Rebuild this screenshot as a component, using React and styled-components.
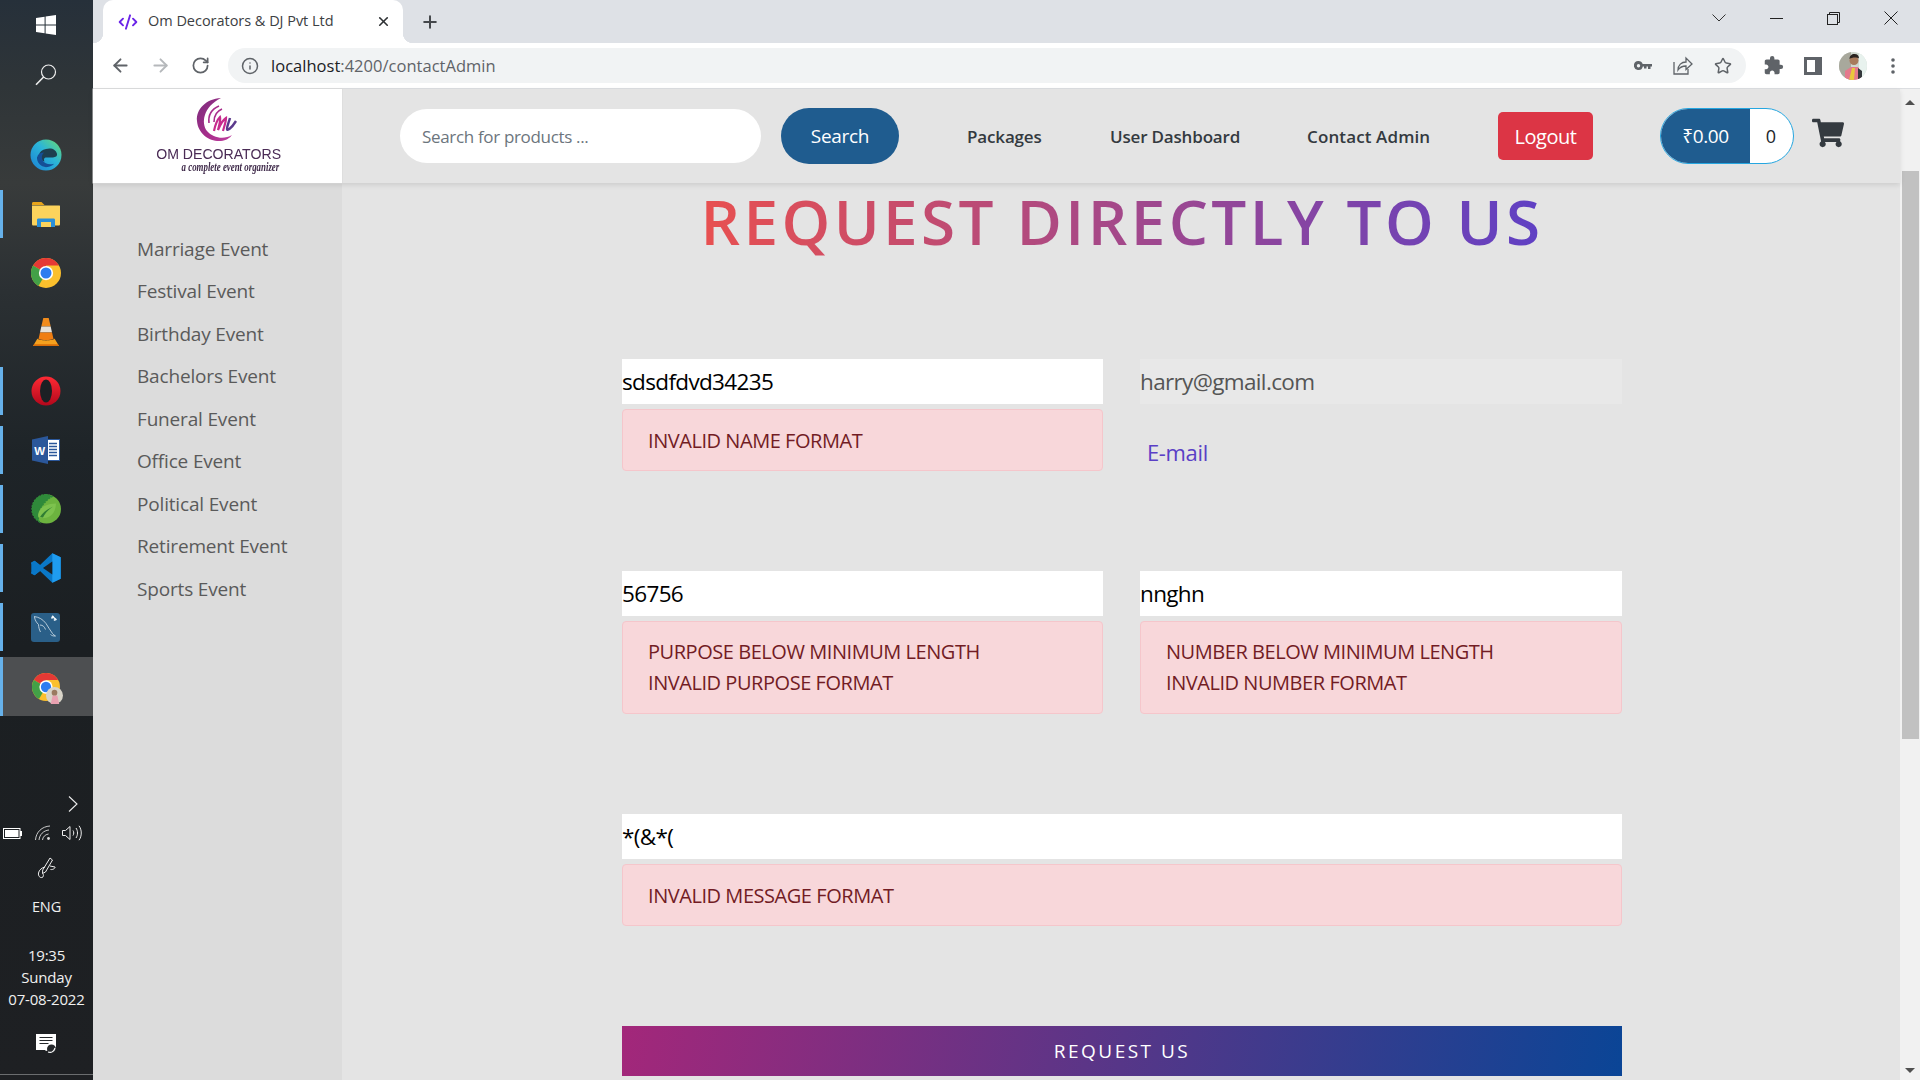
import React from "react";
import styled, { createGlobalStyle } from "styled-components";
import { ArrowLeft, ArrowRight, RotateCw, Info, Star, X, Plus, CodeXml } from "lucide-react";
import { MdExtension } from "react-icons/md";
import { FaShoppingCart } from "react-icons/fa";

const FONT = `"Open Sans", "Noto Sans", sans-serif`;

const Global = createGlobalStyle`
  html, body { margin: 0; padding: 0; height: 1080px; overflow: hidden; background: #e4e4e4; }
  * { box-sizing: border-box; }
  body { font-family: ${FONT}; }
`;

const Screen = styled.div`display: flex; width: 1920px; height: 1080px; overflow: hidden;`;

/* ---------- Windows taskbar ---------- */
const Taskbar = styled.aside`
  width: 93px; flex: none; height: 1080px; display: flex; flex-direction: column;
  background: linear-gradient(180deg, #26303a 0%, #2f3538 8%, #383b3b 17%, #2b3033 27%, #1e2428 42%, #1b1f22 60%, #1e2023 100%);
  color: #f0f0f0;
`;
const SystemSlot = styled.div`
  height: 48px; display: flex; align-items: center; justify-content: center; padding-right: 1px;
  &:first-child { height: 49px; }
  &:nth-child(2) { margin-top: 2px; }
`;
const AppList = styled.div`display: flex; flex-direction: column; gap: 11px; margin-top: 32px;`;
const AppSlot = styled.div`
  position: relative; height: ${p => (p.$active ? 59 : 48)}px; display: flex; align-items: center; justify-content: center;
  margin-top: ${p => (p.$active ? -5 : 0)}px;
  background: ${p => (p.$active ? "#4d4f51" : "transparent")};
  border-left: 3px solid ${p => (p.$running ? "#66b1ea" : "transparent")};
  padding-right: 5px;
`;
const ProfileBadge = styled.span`position: absolute; left: 43px; top: 30px; display: flex;`;
const Tray = styled.div`margin-top: auto; display: flex; flex-direction: column; align-items: center;`;
const TrayChevron = styled.div`align-self: flex-end; margin: 0 15px 12px 0; height: 16px; display: flex;`;
const TrayIcons = styled.div`display: flex; align-items: center; width: 100%; padding-left: 3px; height: 18px;`;
const TrayGlyph = styled.span`display: flex; margin-left: ${p => p.$ml || 0}px;`;
const TrayPen = styled.div`margin-top: 15px; height: 24px; display: flex;`;
const Lang = styled.div`margin-top: 16px; font-size: 14.5px; line-height: 20px; letter-spacing: -.1px;`;
const Clock = styled.div`margin-top: 27px; font-size: 15px; line-height: 22px; text-align: center; letter-spacing: -.2px; white-space: nowrap;`;
const Notice = styled.div`margin-top: 24px; height: 22px; display: flex;`;
const TrayRule = styled.div`width: 100%; height: 1px; background: #6b6d6f; margin-top: 18px; margin-bottom: 5px;`;

const WinLogo = () => (
  <svg width="20" height="20" viewBox="0 0 20 20"><path fill="#fff" d="M0 3l8.6-1.2v7.6H0zM9.6 1.6L20 0v9.4H9.6zM0 10.4h8.6v7.8L0 17zM9.6 10.4H20V20L9.6 18.4z" /></svg>
);
const SearchGlyph = () => (
  <svg width="22" height="22" viewBox="0 0 22 22" fill="none" stroke="#eee" strokeWidth="1.2"><circle cx="13.5" cy="8" r="7" /><path d="M8.6 13L1 20.8" strokeWidth="1.6" /></svg>
);
const EdgeIcon = () => (
  <svg width="32" height="32" viewBox="0 0 32 32">
    <defs>
      <linearGradient id="eg1" x1="0" y1="1" x2="1" y2="0"><stop offset="0" stopColor="#1a7fd4" /><stop offset=".55" stopColor="#2bb5d8" /><stop offset="1" stopColor="#6bdc6e" /></linearGradient>
    </defs>
    <circle cx="16" cy="16" r="15.5" fill="url(#eg1)" />
    <path d="M16 10c5.5-1.6 10 .6 11 4.8.5 2.3-1.5 3.6-4 3.6h-6.5c-2.5 0-3.2 2-1.8 4.2-4.2-1-6-4-5.6-7 .4-2.8 3.2-4.8 6.9-5.6z" fill="#1d3a4a" opacity=".96" />
    <path d="M7 17.8c-.6 6.2 4.7 11.2 10.7 10.2 2.8-.4 5-1.7 6.3-3.3-4 1.3-9.5.6-11.5-3.7-1.2-2.3-.7-5.6 1.5-7.5-3.5.2-6.2 1.5-6.5 4.3z" fill="#154f97" />
  </svg>
);
const FolderIcon = () => (
  <svg width="30" height="26" viewBox="0 0 30 26">
    <path d="M1 2.5C1 1.5 1.6 1 2.5 1h8l3 3H1z" fill="#e8a41a" />
    <path d="M1 4.5h27.5c.4 0 .5.3.5.5v18c0 1-.5 1.500-1.500 1.500h-25c-1 0-1.500-.5-1.500-1.500z" fill="#fcd35c" />
    <path d="M6 26v-7c0-1 .5-1.500 1.500-1.500h15c1 0 1.500.5 1.500 1.500v7h-4v-5h-10v5z" fill="#2a8fd8" />
    <rect x="10" y="21" width="10" height="5" fill="#fcd35c" />
  </svg>
);
const ChromeIcon = ({ size = 30 }) => (
  <svg width={size} height={size} viewBox="0 0 24 24">
    <circle cx="12" cy="12" r="12" fill="#fbc02d" />
    <path d="M12 12L1.6 6A12 12 0 0 1 22.39 6H12z" fill="#e53935" />
    <path d="M12 12L6 22.39A12 12 0 0 1 1.6 6z" fill="#43a047" />
    <circle cx="12" cy="12" r="5.7" fill="#fff" />
    <circle cx="12" cy="12" r="4.4" fill="#2d7cf0" />
  </svg>
);
const VlcIcon = () => (
  <svg width="28" height="30" viewBox="0 0 28 30">
    <path d="M11.3 1h5.4l2 8.5H9.3z" fill="#f28c1c" />
    <path d="M9.3 9.5h9.4l1.3 6H8z" fill="#e8e2d8" />
    <path d="M8 15.5h12l1.5 6.5c-2.5 1.5-12.5 1.5-15 0z" fill="#f07e12" />
    <path d="M5.5 21.5L1 29h26l-4.500-7.500c-.5 2.500-16.500 2.500-17 0z" fill="#f5a11e" />
    <path d="M1 29h26l-1-1.700H2z" fill="#d86d08" />
  </svg>
);
const OperaIcon = () => (
  <svg width="30" height="30" viewBox="0 0 30 30">
    <defs><linearGradient id="opg" x1="0" y1="0" x2="0" y2="1"><stop offset="0" stopColor="#ff2a34" /><stop offset="1" stopColor="#b3081c" /></linearGradient></defs>
    <circle cx="15" cy="15" r="14.5" fill="url(#opg)" />
    <ellipse cx="15" cy="15" rx="6" ry="11.5" fill="#1c2024" />
  </svg>
);
const WordIcon = () => (
  <svg width="28" height="28" viewBox="0 0 28 28">
    <rect x="12" y="3.5" width="15.5" height="21" fill="#fff" stroke="#2b579a" strokeWidth="1" />
    <path d="M17 7.5h8M17 10.5h8M17 13.5h8M17 16.5h8M17 19.5h8" stroke="#2b579a" strokeWidth="1.4" />
    <path d="M0 3.5L16 0v28L0 24.5z" fill="#2b579a" />
    <text x="2.3" y="18.5" fontFamily="Liberation Sans, sans-serif" fontWeight="700" fontSize="11.5" fill="#fff">W</text>
  </svg>
);
const SpringIcon = () => (
  <svg width="30" height="30" viewBox="0 0 30 30">
    <circle cx="15.5" cy="15" r="14.5" fill="#6cb33f" />
    <path d="M15 .5A14.5 14.5 0 0 0 1 15a14.5 14.5 0 0 0 7 12.5C6 24 7 11 21 2.5 19 1.2 17 .5 15 .5z" fill="#2f8a3a" strokeDasharray="2 1" stroke="#2f8a3a" strokeWidth="1.5" />
    <path d="M7 22.5c0-8 6-12.5 18-13-.3 9-5.5 14.5-12 14.5-2.500 0-4.500-.5-6-1.500z" fill="#7dc24e" />
    <path d="M9 23c3-5 8-8 13-10.5-5 3.500-8 7-10 11z" fill="#2f7d33" />
  </svg>
);
const VscIcon = () => (
  <svg width="30" height="30" viewBox="0 0 100 100">
    <path d="M71 99l28-13.5V14.5L71 1 30 40 12 26 1 32v36l11 6 18-14z" fill="#0a78c8" />
    <path d="M71 99l28-13.5V14.5L71 1z" fill="#1f9cf0" />
    <path d="M71 28L40 50l31 22z" fill="#1c2125" />
    <path d="M1 32l11-6 18 14-12 10L1 36zM1 68l11 6 18-14-12-10L1 64z" fill="#0a78c8" />
  </svg>
);
const MysqlIcon = () => (
  <svg width="29" height="29" viewBox="0 0 29 29">
    <rect width="29" height="29" rx="3" fill="#2a5f88" />
    <path d="M3 3.5c5 .5 9 3 12 7 2.5 3.5 4 7 6.5 10 .8 1 1.8 1.8 3 2.5-2 .2-3.6-.3-5-1.500M3.5 4c.3 3 2 5.5 4 7.5.2 2.5.6 5 2 7.5M9 12c3 0 4.5 2 5.500 4.500" fill="none" stroke="#d7e3ec" strokeWidth=".8" />
    <path d="M21 3l4.5 4M22.5 3l-2 2.5M25 5.5l-2 2" stroke="#eef4f8" strokeWidth="1.6" fill="none" />
  </svg>
);
const ProfileDisc = ({ size = 28 }) => (
  <svg width={size} height={size} viewBox="0 0 28 28">
    <clipPath id={`pd${size}`}><circle cx="14" cy="14" r="14" /></clipPath>
    <g clipPath={`url(#pd${size})`}>
      <rect width="28" height="28" fill="#cfd8cf" />
      <rect width="12" height="28" fill="#a8a89c" />
      <rect x="20" width="8" height="28" fill="#e8f2ee" />
      <path d="M6 28v-9l6-4h7l3 5v8z" fill="#e4798c" />
      <path d="M10 28l3-12h3l-1 12z" fill="#e8c83c" />
      <path d="M19 16l4 3v9h-4z" fill="#34383c" />
      <circle cx="15" cy="8.5" r="4.5" fill="#a87b5c" />
      <path d="M10.5 7c0-3 2-5 5-5s4.5 2 4.5 4.5c-2-1.5-7-1.5-9.5.5z" fill="#2a2320" />
    </g>
  </svg>
);

/* ---------- Browser chrome ---------- */
const Browser = styled.div`flex: 1; min-width: 0; display: flex; flex-direction: column; height: 1080px;`;
const TabStrip = styled.div`height: 43px; flex: none; background: #dee1e6; display: flex; padding-left: 10px;`;
const Tab = styled.div`
  position: relative; width: 300px; height: 43px; background: #fff; border-radius: 10px 10px 0 0;
  display: flex; align-items: center; padding-left: 15px; font-size: 14.5px; color: #3c4043; letter-spacing: -.03px;
  &::before, &::after { content: ""; position: absolute; bottom: 0; width: 10px; height: 10px; }
  &::before { left: -10px; background: radial-gradient(circle at 0 0, #dee1e6 10px, #fff 10.5px); }
  &::after { right: -10px; background: radial-gradient(circle at 100% 0, #dee1e6 10px, #fff 10.5px); }
`;
const TabLabel = styled.span`margin-left: 10px; white-space: nowrap; flex: 1; padding-bottom: 3px;`;
const TabClose = styled.span`display: flex; margin-right: 12px; color: #2e3134;`;
const NewTab = styled.span`display: flex; align-items: center; margin-left: 17px; color: #45484c;`;
const WindowControls = styled.div`margin-left: auto; display: flex; align-items: center; height: 36px;`;
const WinButton = styled.div`width: 57.5px; height: 36px; display: flex; align-items: center; justify-content: center; color: #222;`;

const Toolbar = styled.div`
  height: 46px; flex: none; background: #fff; border-bottom: 1px solid #dcdee1; display: flex; align-items: flex-start; padding: 5px 7px 0;
`;
const NavCluster = styled.div`display: flex; margin-right: 8px;`;
const ToolButton = styled.div`
  width: 40px; height: 35px; display: flex; align-items: center; justify-content: center; color: ${p => p.$color || "#5f6368"}; flex: none;
`;
const Omnibox = styled.div`
  flex: 1; min-width: 0; height: 35px; border-radius: 18px; background: #f1f3f4; display: flex; align-items: center;
  padding: 0 3px 0 13px; margin-right: 7px;
`;
const UrlText = styled.div`flex: 1; margin-left: 12px; font-size: 16.5px; color: #5f6368; letter-spacing: .02px; white-space: nowrap; padding-bottom: 1px;`;
const UrlHost = styled.span`color: #202124;`;

const Viewport = styled.div`flex: 1; min-height: 0; display: flex;`;
const Page = styled.div`flex: 1; min-width: 0; display: flex; flex-direction: column; background: #e4e4e4;`;

const Scrollbar = styled.div`width: 20px; flex: none; background: #f1f1f1; display: flex; flex-direction: column; align-items: center;`;
const ScrollUp = styled.div`width: 0; height: 0; margin-top: 11px; border: 5px solid transparent; border-top: 0; border-bottom: 5px solid #505050;`;
const Thumb = styled.div`width: 17px; height: 568px; margin: 66px 0 0 1px; background: #c1c1c1;`;
const ScrollDown = styled.div`width: 0; height: 0; margin-top: auto; margin-bottom: 7px; border: 5px solid transparent; border-bottom: 0; border-top: 5px solid #505050;`;

/* ---------- Site header ---------- */
const Header = styled.header`
  position: relative; z-index: 1; height: 94px; flex: none; display: flex; align-items: center; background: #e4e4e4;
  box-shadow: 0 2px 5px rgba(0,0,0,.1);
`;
const LogoCell = styled.div`
  width: 249px; height: 94px; flex: none; background: #fff; display: flex; flex-direction: column; align-items: center;
  padding: 8px 0 0 7px; box-shadow: 0 0 0 .5px #d8d8d8;
`;
const LogoMark = styled.div`display: flex; margin-left: -2px;`;
const LogoName = styled.div`
  font-family: "Liberation Sans", sans-serif; font-size: 15.5px; line-height: 16px; margin: 3px 0 0 -5px; color: #4a2b55; white-space: nowrap; transform: scaleX(.91);
`;
const LogoTag = styled.div`
  font-family: "Liberation Serif", serif; font-style: italic; font-weight: 700; font-size: 11.5px; line-height: 10px; color: #3f2a4a; white-space: nowrap; margin-left: 18px; transform: scaleX(.77);
`;
const SearchField = styled.input`
  width: 361px; height: 54px; margin-left: 58px; border: 0; outline: 0; border-radius: 27px; background: #fff; padding: 0 22px;
  font-family: ${FONT}; font-size: 17px; letter-spacing: -.33px; color: #495057;
  &::placeholder { color: #6c757d; opacity: 1; }
`;
const SearchButton = styled.button`
  width: 118px; height: 56px; margin-left: 20px; border: 0; border-radius: 28px; background: #1f5c8f; color: #fff;
  font-family: ${FONT}; font-size: 19px; letter-spacing: -.3px; padding: 0;
`;
const NavLinks = styled.nav`display: flex; gap: 68px; margin-left: 68px; align-items: center;`;
const NavLink = styled.a`font-size: 17px; font-weight: 600; color: #343a40; letter-spacing: ${p => p.$ls}px; white-space: nowrap; width: ${p => p.$w}px;`;
const LogoutButton = styled.button`
  width: 95px; height: 48px; margin-left: 68px; border: 0; border-radius: 5px; background: #dc3545; color: #fff;
  font-family: ${FONT}; font-size: 20px; letter-spacing: -.5px; padding: 0;
`;
const CartPill = styled.div`
  width: 134px; height: 56px; margin-left: 67px; border-radius: 28px; border: 1px solid #25a6e0; overflow: hidden; display: flex; background: #fff;
`;
const CartTotal = styled.div`width: 89px; background: #1f5c8f; color: #fff; display: flex; align-items: center; justify-content: center; font-size: 19px; letter-spacing: -.35px;`;
const CartCount = styled.div`flex: 1; display: flex; align-items: center; justify-content: center; font-size: 18px; color: #212529; padding-right: 1px;`;
const CartIcon = styled.div`margin: -6px 0 0 18px; display: flex; color: #343a40;`;

/* ---------- Body ---------- */
const Body = styled.div`flex: 1; min-height: 0; display: flex;`;
const Sidebar = styled.nav`width: 249px; flex: none; background: #dcdcdc; padding: 45px 0 0 44px;`;
const SideItem = styled.div`height: 42.45px; line-height: 42.45px; font-size: 19px; color: #5a5a5a; letter-spacing: -.17px; white-space: nowrap;`;
const Main = styled.main`flex: 1; min-width: 0; padding-left: 280px;`;
const Column = styled.div`width: 1000px;`;
const Title = styled.h1`
  margin: 0 0 100px; height: 76px; line-height: 76px; text-align: center; font-size: 62px; font-weight: 600; letter-spacing: 3.4px; white-space: nowrap;
  background: linear-gradient(90deg, #e85050 0%, #5f40c4 100%); background-size: 840px 100%; background-position: center; background-repeat: no-repeat;
  -webkit-background-clip: text; background-clip: text; color: transparent; -webkit-text-fill-color: transparent;
`;
const Form = styled.form`display: flex; flex-direction: column; gap: 100px;`;
const Row = styled.div`display: grid; grid-template-columns: ${p => (p.$single ? "1fr" : "481px 482px")}; column-gap: 37px; align-items: start;`;
const Field = styled.div`display: flex; flex-direction: column; gap: 5px;`;
const TextInput = styled.input`
  width: 100%; height: 45px; border: 0; outline: 0; padding: 0; font-family: ${FONT}; font-size: 22.5px; letter-spacing: -.65px;
  color: ${p => (p.disabled ? "#555" : "#000")}; background: ${p => (p.disabled ? "#e8e8e8" : "#fff")};
  &:disabled { -webkit-text-fill-color: #555; opacity: 1; }
`;
const Alert = styled.div`
  border: 1px solid #f5c6cb; border-radius: 4px; background: #f8d7da; color: #721c24; padding: ${p => (p.$multi ? "15px 25px" : "16px 25px 14px")};
  font-size: 20px; line-height: ${p => (p.$multi ? 30.5 : 30)}px; letter-spacing: -.45px;
`;
const FieldLabel = styled.label`display: block; margin: 27px 0 0 7px; font-size: 22px; line-height: 32px; color: #5a3fc6; letter-spacing: -.35px;`;
const SubmitButton = styled.button`
  height: 50px; width: 100%; border: 0; padding: 0; color: #fff; font-family: ${FONT}; font-size: 19px; letter-spacing: 2.5px;
  background: linear-gradient(100deg, #a3277a 0%, #0a4596 100%);
`;

const apps = [
  ["edge", <EdgeIcon />, false],
  ["folder", <FolderIcon />, true],
  ["chrome", <ChromeIcon />, false],
  ["vlc", <VlcIcon />, false],
  ["opera", <OperaIcon />, true],
  ["word", <WordIcon />, true],
  ["spring", <SpringIcon />, true],
  ["vscode", <VscIcon />, true],
  ["mysql", <MysqlIcon />, true],
];
const events = ["Marriage", "Festival", "Birthday", "Bachelors", "Funeral", "Office", "Political", "Retirement", "Sports"];

export default function App() {
  return (
    <Screen>
      <Global />
      <Taskbar>
        <SystemSlot><WinLogo /></SystemSlot>
        <SystemSlot><SearchGlyph /></SystemSlot>
        <AppList>
          {apps.map(([k, icon, running]) => <AppSlot key={k} $running={running}>{icon}</AppSlot>)}
          <AppSlot $running $active>
            <ChromeIcon size={28} />
            <ProfileBadge>
              <svg width="17" height="17" viewBox="0 0 18 18"><circle cx="9" cy="9" r="9" fill="#d8d4c8" /><path d="M5 18l2-9h5l2 9z" fill="#e8a0b0" /><circle cx="9" cy="6" r="3" fill="#9a7a60" /></svg>
            </ProfileBadge>
          </AppSlot>
        </AppList>
        <Tray>
          <TrayChevron><svg width="10" height="16" viewBox="0 0 10 16" fill="none" stroke="#eee" strokeWidth="1.1"><path d="M1 .5l8 7.5-8 7.5" /></svg></TrayChevron>
          <TrayIcons>
            <TrayGlyph><svg width="19" height="11" viewBox="0 0 19 11"><rect x=".5" y=".5" width="16.5" height="10" fill="none" stroke="#fff" /><rect x="2" y="2" width="13.5" height="7" fill="#fff" /><rect x="17" y="3" width="2" height="5" fill="#fff" /></svg></TrayGlyph>
            <TrayGlyph $ml={13}><svg width="18" height="16" viewBox="0 0 18 16" fill="none" stroke="#ddd" strokeWidth=".9"><path d="M.5 15C1 7 7 1.5 15 1M4 15c.5-5.5 4.5-9.5 10-10M7.5 15c.3-3 2.5-5.5 6-6" /><circle cx="13.5" cy="13.5" r="1.4" fill="#ddd" stroke="none" /></svg></TrayGlyph>
            <TrayGlyph $ml={9}><svg width="21" height="16" viewBox="0 0 21 16" fill="none" stroke="#eee" strokeWidth="1"><path d="M.5 5.5h3L8 1.5v13l-4.5-4h-3zM11 5.5c1 1.5 1 3.5 0 5M14 3c2 3 2 7 0 10M17 .8c3 4 3 10.4 0 14.4" /></svg></TrayGlyph>
          </TrayIcons>
          <TrayPen><svg width="20" height="22" viewBox="0 0 20 22" fill="none" stroke="#eee" strokeWidth="1"><path d="M13 1l2.5 2-7 12-3 1.5.2-3.5zM13 9l5 1c.5 1-2 3-4.5 2.5M8 10c-3 .5-6 3-6.5 6-.5 3 1.5 5 3.5 4.5 2-.5 1.5-3 .8-4" /></svg></TrayPen>
          <Lang>ENG</Lang>
          <Clock>19:35<br />Sunday<br />07-08-2022</Clock>
          <Notice><svg width="21" height="21" viewBox="0 0 21 21"><path d="M0 0h20v16h-6l-4 1-1-1H0z" fill="#fff" /><path d="M3.5 3.5h13M3.5 6.5h13M3.5 9.5h9" stroke="#25282b" strokeWidth="1" /><circle cx="15.5" cy="15" r="4.5" fill="#25282b" /><path d="M12 18c3 1 6 0 7-4" stroke="#fff" fill="none" strokeWidth="1.1" /></svg></Notice>
          <TrayRule />
        </Tray>
      </Taskbar>

      <Browser>
        <TabStrip>
          <Tab>
            <CodeXml size={20} color="#6b24e8" strokeWidth={2.3} />
            <TabLabel>Om Decorators &amp; DJ Pvt Ltd</TabLabel>
            <TabClose><X size={15} strokeWidth={2.6} /></TabClose>
          </Tab>
          <NewTab><Plus size={20} strokeWidth={2.4} /></NewTab>
          <WindowControls>
            <WinButton><svg width="14" height="8" viewBox="0 0 14 8" fill="none" stroke="#333"><path d="M.5.5L7 7 13.5.5" /></svg></WinButton>
            <WinButton><svg width="13" height="1" viewBox="0 0 13 1"><rect width="13" height="1" fill="#222" /></svg></WinButton>
            <WinButton><svg width="13" height="13" viewBox="0 0 13 13" fill="none" stroke="#222"><rect x=".5" y="2.5" width="10" height="10" /><path d="M2.5 2.5v-2h10v10h-2" /></svg></WinButton>
            <WinButton><svg width="14" height="14" viewBox="0 0 14 14" fill="none" stroke="#222"><path d="M.5.5l13 13M13.5.5l-13 13" /></svg></WinButton>
          </WindowControls>
        </TabStrip>

        <Toolbar>
          <NavCluster>
            <ToolButton><ArrowLeft size={21} strokeWidth={2.2} /></ToolButton>
            <ToolButton $color="#b5b8bb"><ArrowRight size={21} strokeWidth={2.2} /></ToolButton>
            <ToolButton><RotateCw size={19} strokeWidth={2.2} /></ToolButton>
          </NavCluster>
          <Omnibox>
            <Info size={18} color="#5f6368" strokeWidth={2} />
            <UrlText><UrlHost>localhost</UrlHost>:4200/contactAdmin</UrlText>
            <ToolButton>
              <svg width="18" height="10" viewBox="0 0 18 10" fill="#5f6368"><path d="M4.5 0a4.5 4.5 0 0 1 4.2 3H18v2.5h-1.5V8H14V5.5h-1.500V7.500H10V5.500H8.800A4.500 4.500 0 1 1 4.500 0zm0 3a1.700 1.700 0 1 0 0 3.400 1.700 1.700 0 0 0 0-3.400z" /></svg>
            </ToolButton>
            <ToolButton>
              <svg width="20" height="19" viewBox="0 0 20 19" fill="none" stroke="#5f6368" strokeWidth="1.3"><path d="M1 6v12h14v-5" /><path d="M5 14c0-5 3.5-8 8-8V2l6 6-6 5.5V10c-3.500 0-6 1-8 4z" /></svg>
            </ToolButton>
            <ToolButton><Star size={18} strokeWidth={2} /></ToolButton>
          </Omnibox>
          <ToolButton><MdExtension size={21} /></ToolButton>
          <ToolButton>
            <svg width="18" height="18" viewBox="0 0 18 18"><path fillRule="evenodd" d="M0 0h18v18H0zM3 3v12h8V3z" fill="#5f6368" /></svg>
          </ToolButton>
          <ToolButton><ProfileDisc size={28} /></ToolButton>
          <ToolButton>
            <svg width="4" height="16" viewBox="0 0 4 16" fill="#5f6368"><circle cx="2" cy="2" r="1.8" /><circle cx="2" cy="8" r="1.8" /><circle cx="2" cy="14" r="1.8" /></svg>
          </ToolButton>
        </Toolbar>

        <Viewport>
          <Page>
            <Header>
              <LogoCell>
                <LogoMark>
                  <svg width="50" height="46" viewBox="0 0 50 46">
                    <defs>
                      <linearGradient id="lg1" x1="0" y1="0" x2="1" y2="1"><stop offset="0" stopColor="#7a2e7c" /><stop offset=".6" stopColor="#a82d8c" /><stop offset="1" stopColor="#c040a0" /></linearGradient>
                    </defs>
                    <path d="M26 1C11 2 1 12 2 24c1 13 13 21 24 20 5-.5 9-3 11-6-8 5-19 3-25-4C6 26 8 10 26 1z" fill="url(#lg1)" />
                    <path d="M24 9c-7 3-11 9-10 17M27 12c-5 2-8 6-8 13" fill="none" stroke="#a82d8c" strokeWidth="1.6" />
                    <path d="M19 34c1-5 3-11 6-14 1 3-1 9-2 13 2-5 5-10 8-12 0 4-2 9-3 13" fill="none" stroke="#c72c8e" strokeWidth="2.2" />
                    <path d="M35 21c-1 4-3 8-3 11 0 2 4 0 9-8" fill="none" stroke="#5b3a8c" strokeWidth="2.4" />
                  </svg>
                </LogoMark>
                <LogoName>OM DECORATORS</LogoName>
                <LogoTag>a complete event organizer</LogoTag>
              </LogoCell>
              <SearchField placeholder="Search for products ..." />
              <SearchButton>Search</SearchButton>
              <NavLinks>
                <NavLink $w={75} $ls={-.15}>Packages</NavLink>
                <NavLink $w={129} $ls={-.18}>User Dashboard</NavLink>
                <NavLink $w={123} $ls={.12}>Contact Admin</NavLink>
              </NavLinks>
              <LogoutButton>Logout</LogoutButton>
              <CartPill>
                <CartTotal>₹0.00</CartTotal>
                <CartCount>0</CartCount>
              </CartPill>
              <CartIcon><FaShoppingCart size={32} /></CartIcon>
            </Header>
            <Body>
              <Sidebar>
                {events.map(e => <SideItem key={e}>{e} Event</SideItem>)}
              </Sidebar>
              <Main>
                <Column>
                  <Title>REQUEST DIRECTLY TO US</Title>
                  <Form>
                    <Row>
                      <Field>
                        <TextInput readOnly value="sdsdfdvd34235" />
                        <Alert>INVALID NAME FORMAT</Alert>
                      </Field>
                      <Field>
                        <TextInput disabled value="harry@gmail.com" />
                        <FieldLabel>E-mail</FieldLabel>
                      </Field>
                    </Row>
                    <Row>
                      <Field>
                        <TextInput readOnly value="56756" />
                        <Alert $multi>PURPOSE BELOW MINIMUM LENGTH<br />INVALID PURPOSE FORMAT</Alert>
                      </Field>
                      <Field>
                        <TextInput readOnly value="nnghn" />
                        <Alert $multi>NUMBER BELOW MINIMUM LENGTH<br />INVALID NUMBER FORMAT</Alert>
                      </Field>
                    </Row>
                    <Row $single>
                      <Field>
                        <TextInput readOnly value="*(&*(" />
                        <Alert>INVALID MESSAGE FORMAT</Alert>
                      </Field>
                    </Row>
                    <SubmitButton type="button">REQUEST US</SubmitButton>
                  </Form>
                </Column>
              </Main>
            </Body>
          </Page>
          <Scrollbar>
            <ScrollUp />
            <Thumb />
            <ScrollDown />
          </Scrollbar>
        </Viewport>
      </Browser>
    </Screen>
  );
}
